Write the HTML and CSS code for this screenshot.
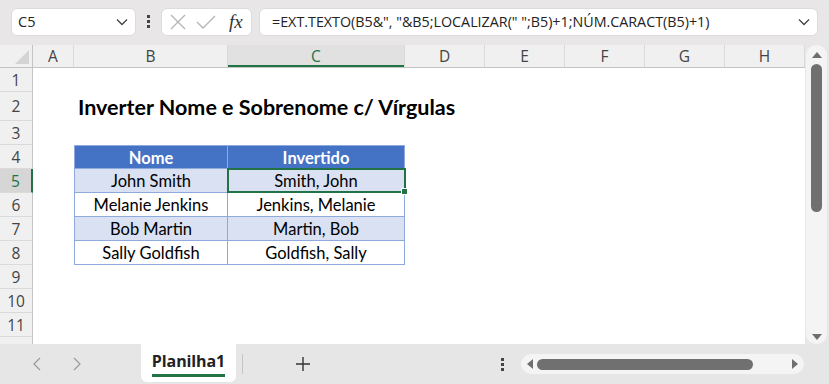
FILE: index.html
```html
<!DOCTYPE html>
<html lang="pt">
<head>
    <meta charset="UTF-8">
    <title>Inverter Nome e Sobrenome</title>
    <link rel="stylesheet" href="styles.css">
</head>
<body>

<!-- Formula bar -->
<div class="topbar">
    <div class="namebox">
        <span>C5</span>
        <svg width="12" height="8" viewBox="0 0 12 8"><path d="M1 1.5 L6 6.5 L11 1.5" fill="none" stroke="#444" stroke-width="1.3"/></svg>
    </div>
    <div class="vdots"><i></i><i></i><i></i></div>
    <div class="fxbox">
        <svg width="18" height="18" viewBox="0 0 18 18"><path d="M2 2 L16 16 M16 2 L2 16" stroke="#b4b4b4" stroke-width="1.3"/></svg>
        <svg width="22" height="18" viewBox="0 0 22 18"><path d="M2 9 L8 15 L20 3" fill="none" stroke="#b4b4b4" stroke-width="1.3"/></svg>
        <span class="fx">fx</span>
    </div>
    <div class="formula">
        <span>=EXT.TEXTO(B5&amp;", "&amp;B5;LOCALIZAR(" ";B5)+1;NÚM.CARACT(B5)+1)</span>
        <svg width="12" height="8" viewBox="0 0 12 8"><path d="M1 1.5 L6 6.5 L11 1.5" fill="none" stroke="#444" stroke-width="1.3"/></svg>
    </div>
</div>

<!-- Sheet -->
<div class="sheet">
    <div class="grid">
        <div class="row colhead">
            <div class="corner"><span class="tri"></span></div>
            <div>A</div><div>B</div><div class="sel">C</div><div>D</div><div>E</div><div>F</div><div>G</div><div>H</div>
        </div>
        <div class="row"><div class="rh">1</div></div>
        <div class="row tall">
            <div class="rh">2</div><div></div>
            <div class="title">Inverter Nome e Sobrenome c/ Vírgulas</div>
        </div>
        <div class="row"><div class="rh">3</div></div>
        <div class="row">
            <div class="rh">4</div><div></div>
            <div class="cell head first">Nome</div>
            <div class="cell head">Invertido</div>
        </div>
        <div class="row">
            <div class="rh selrow">5</div><div></div>
            <div class="cell band first">John Smith</div>
            <div class="cell band active">Smith, John</div>
        </div>
        <div class="row">
            <div class="rh">6</div><div></div>
            <div class="cell first">Melanie Jenkins</div>
            <div class="cell">Jenkins, Melanie</div>
        </div>
        <div class="row">
            <div class="rh">7</div><div></div>
            <div class="cell band first">Bob Martin</div>
            <div class="cell band">Martin, Bob</div>
        </div>
        <div class="row">
            <div class="rh">8</div><div></div>
            <div class="cell first">Sally Goldfish</div>
            <div class="cell">Goldfish, Sally</div>
        </div>
        <div class="row"><div class="rh">9</div></div>
        <div class="row"><div class="rh">10</div></div>
        <div class="row"><div class="rh">11</div></div>
        <div class="row"><div class="rh"></div></div>
    </div>
    <div class="vscroll">
        <div class="track">
            <span class="arr up"></span>
            <span class="thumb"></span>
            <span class="arr down"></span>
        </div>
    </div>
</div>

<!-- Sheet tabs -->
<div class="tabbar">
    <div class="nav">
        <svg width="10" height="16" viewBox="0 0 10 16"><path d="M8 2 L2 8 L8 14" fill="none" stroke="#9a9a9a" stroke-width="1.2"/></svg>
        <svg width="10" height="16" viewBox="0 0 10 16"><path d="M2 2 L8 8 L2 14" fill="none" stroke="#9a9a9a" stroke-width="1.2"/></svg>
    </div>
    <div class="tab"><span>Planilha1</span></div>
    <div class="tabsep"></div>
    <div class="plus">
        <svg width="16" height="16" viewBox="0 0 16 16"><path d="M8 1 V15 M1 8 H15" stroke="#333" stroke-width="1.4"/></svg>
    </div>
    <div class="vdots small"><i></i><i></i><i></i></div>
    <div class="hscroll">
        <span class="arr left"></span>
        <span class="hthumb"></span>
        <span class="arr right"></span>
    </div>
</div>

</body>
</html>
```

FILE: styles.css
```css
body {
    margin: 0;
    width: 829px;
    height: 384px;
    overflow: hidden;
    font-family: "Open Sans", "Noto Sans", sans-serif;
    background-color: #e8e6e7;
}

/* formula bar */
.topbar {
    display: flex;
    align-items: center;
    height: 45px;
    padding: 0 11px 2px 11px;
    box-sizing: border-box;
}
.namebox {
    width: 125px;
    height: 28px;
    box-sizing: border-box;
    display: flex;
    align-items: center;
    justify-content: space-between;
    padding: 0 7px 0 6px;
    background-color: #fff;
    border: 1px solid #dcdcdc;
    border-radius: 6px;
    font-size: 14.5px;
    color: #222;
}
.vdots {
    display: flex;
    flex-direction: column;
    gap: 2px;
    margin: 0 11px 0 11px;
}
.vdots i {
    width: 3px;
    height: 3px;
    background-color: #444;
    display: block;
}
.fxbox {
    width: 91px;
    height: 28px;
    box-sizing: border-box;
    display: flex;
    align-items: center;
    gap: 8px;
    padding: 0 6px 0 7px;
    background-color: #fff;
    border: 1px solid #dcdcdc;
    border-radius: 6px;
}
.fx {
    font-family: "Liberation Serif", serif;
    font-style: italic;
    font-size: 19px;
    color: #333;
    margin-left: 4px;
}
.formula {
    flex: 1;
    height: 28px;
    margin-left: 7px;
    box-sizing: border-box;
    display: flex;
    align-items: center;
    justify-content: space-between;
    padding: 0 7px 0 12px;
    background-color: #fff;
    border: 1px solid #dcdcdc;
    border-radius: 6px;
    font-size: 14.3px;
    color: #222;
    white-space: nowrap;
}

/* sheet */
.sheet {
    display: flex;
    height: 299px;
    overflow: hidden;
}
.grid {
    width: 805px;
    background-color: #fff;
}
.row {
    display: grid;
    grid-template-columns: 33px 41px 154px 177px 80px 80px 80px 80px 80px;
    grid-template-rows: 100%;
    height: 24px;
}
.row.tall {
    height: 29px;
}
.colhead {
    height: 23px;
    background-color: #f0f0f0;
    border-bottom: 1px solid #c4c4c4;
    box-sizing: border-box;
}
.colhead div {
    border-right: 1px solid #dadada;
    text-align: center;
    font-size: 15.5px;
    line-height: 22px;
    color: #444;
}
.colhead .corner {
    position: relative;
    border-right: 1px solid #c4c4c4;
}
.corner .tri {
    position: absolute;
    right: 3px;
    bottom: 3px;
    width: 0;
    height: 0;
    border-left: 14px solid transparent;
    border-bottom: 14px solid #d4d4d4;
}
.colhead .sel {
    color: #217346;
    background-color: #e1e1e1;
    box-shadow: inset 0 -2px 0 #217346;
}
.rh {
    background-color: #f0f0f0;
    border-right: 1px solid #c4c4c4;
    border-bottom: 1px solid #dadada;
    text-align: center;
    font-size: 15.5px;
    line-height: 24px;
    color: #444;
}
.tall .rh {
    line-height: 29px;
}
.rh.selrow {
    background-color: #d6d6d6;
    color: #217346;
    border-right: 2px solid #217346;
}
.title {
    grid-column: 3 / span 3;
    font-family: "Lato", sans-serif;
    font-weight: bold;
    font-size: 21.5px;
    line-height: 31px;
    color: #000;
    white-space: nowrap;
    padding-left: 4px;
}
.cell {
    font-family: "Lato", sans-serif;
    font-size: 16.5px;
    line-height: 21px;
    padding-top: 2px;
    text-align: center;
    color: #000;
    border-right: 1px solid #8ea9db;
    border-bottom: 1px solid #8ea9db;
    position: relative;
}
.cell.first {
    border-left: 1px solid #8ea9db;
}
.cell.head {
    background-color: #4472c4;
    color: #fff;
    font-weight: bold;
    border-top: 1px solid #8ea9db;
    line-height: 20px;
}
.cell.band {
    background-color: #d9e1f2;
}
.cell.active::after {
    content: "";
    position: absolute;
    left: -1px;
    top: -1px;
    right: -2px;
    bottom: -1px;
    border: 2px solid #217346;
}
.cell.active::before {
    content: "";
    position: absolute;
    right: -4px;
    bottom: -3px;
    width: 5px;
    height: 5px;
    background-color: #217346;
    border: 1px solid #fff;
    z-index: 1;
}

/* vertical scrollbar */
.vscroll {
    width: 24px;
    padding: 0 2px 0 1px;
    box-sizing: border-box;
}
.track {
    height: 100%;
    background-color: #f4f4f4;
    border-radius: 10px;
    display: flex;
    flex-direction: column;
    align-items: center;
}
.arr {
    width: 0;
    height: 0;
    display: block;
}
.arr.up {
    margin-top: 7px;
    border-left: 5px solid transparent;
    border-right: 5px solid transparent;
    border-bottom: 6px solid #6e6e6e;
}
.arr.down {
    margin-top: auto;
    margin-bottom: 4px;
    border-left: 5px solid transparent;
    border-right: 5px solid transparent;
    border-top: 6px solid #6e6e6e;
}
.thumb {
    width: 11px;
    height: 148px;
    margin-top: 6px;
    border-radius: 6px;
    background-color: #707070;
}

/* tab bar */
.tabbar {
    display: flex;
    align-items: center;
    height: 40px;
    background-color: #e6e6e6;
}
.nav {
    display: flex;
    gap: 30px;
    margin-left: 32px;
    width: 109px;
}
.tab {
    align-self: flex-start;
    width: 95px;
    height: 38px;
    box-sizing: border-box;
    background-color: #fff;
    border-radius: 0 0 6px 6px;
    display: flex;
    justify-content: center;
    padding-top: 6px;
}
.tab span {
    font-family: "Open Sans", sans-serif;
    font-weight: bold;
    font-size: 16px;
    letter-spacing: -0.1px;
    color: #222;
    height: 24px;
    border-bottom: 3px solid #217346;
}
.tabsep {
    width: 1px;
    height: 20px;
    background-color: #c4c4c4;
    margin-left: 6px;
}
.plus {
    margin-left: 52px;
    display: flex;
}
.vdots.small {
    margin: 0 0 0 190px;
}
.hscroll {
    margin-left: 17px;
    width: 283px;
    height: 20px;
    background-color: #f4f4f4;
    border-radius: 10px;
    display: flex;
    align-items: center;
}
.arr.left {
    margin-left: 6px;
    border-top: 5px solid transparent;
    border-bottom: 5px solid transparent;
    border-right: 6px solid #6e6e6e;
}
.hthumb {
    width: 216px;
    height: 11px;
    margin-left: 4px;
    border-radius: 6px;
    background-color: #707070;
}
.arr.right {
    margin-left: auto;
    margin-right: 6px;
    border-top: 5px solid transparent;
    border-bottom: 5px solid transparent;
    border-left: 6px solid #6e6e6e;
}
```
